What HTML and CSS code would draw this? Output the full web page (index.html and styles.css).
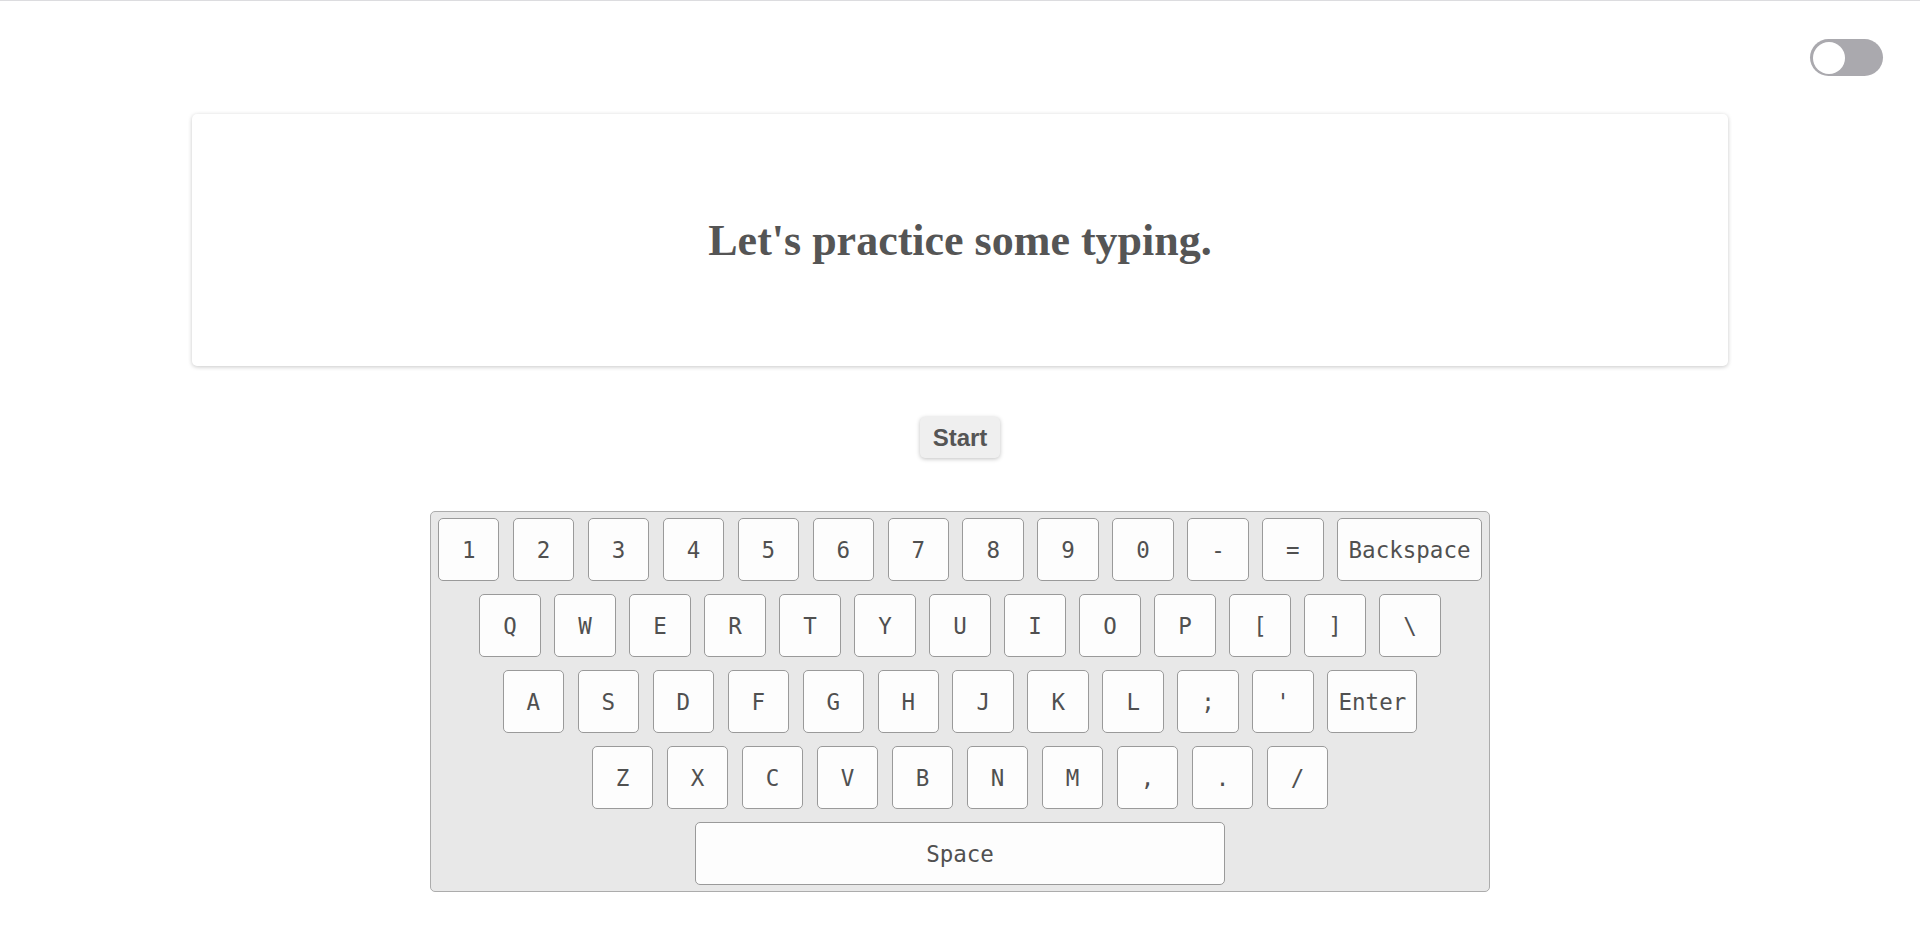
FILE: index.html
```html
<!DOCTYPE html>
<html lang="en">
<head>
<meta charset="utf-8">
<title>Typing Practice</title>
<link rel="stylesheet" href="styles.css">
</head>
<body>
<header class="topbar">
  <label class="toggle"><span class="knob"></span></label>
</header>
<main class="main">
  <section class="card">
    <h1 class="prompt">Let's practice some typing.</h1>
  </section>
  <button class="start">Start</button>
  <div class="keyboard">
    <div class="row">
      <div class="key">1</div><div class="key">2</div><div class="key">3</div><div class="key">4</div><div class="key">5</div><div class="key">6</div><div class="key">7</div><div class="key">8</div><div class="key">9</div><div class="key">0</div><div class="key">-</div><div class="key">=</div><div class="key backspace">Backspace</div>
    </div>
    <div class="row">
      <div class="key">Q</div><div class="key">W</div><div class="key">E</div><div class="key">R</div><div class="key">T</div><div class="key">Y</div><div class="key">U</div><div class="key">I</div><div class="key">O</div><div class="key">P</div><div class="key">[</div><div class="key">]</div><div class="key">\</div>
    </div>
    <div class="row">
      <div class="key">A</div><div class="key">S</div><div class="key">D</div><div class="key">F</div><div class="key">G</div><div class="key">H</div><div class="key">J</div><div class="key">K</div><div class="key">L</div><div class="key">;</div><div class="key">'</div><div class="key enter">Enter</div>
    </div>
    <div class="row">
      <div class="key">Z</div><div class="key">X</div><div class="key">C</div><div class="key">V</div><div class="key">B</div><div class="key">N</div><div class="key">M</div><div class="key">,</div><div class="key">.</div><div class="key">/</div>
    </div>
    <div class="row">
      <div class="key space">Space</div>
    </div>
  </div>
</main>
</body>
</html>
```

FILE: styles.css
```css
html, body {
  margin: 0;
  padding: 0;
  background: #ffffff;
}

body {
  border-top: 1px solid #dcdcdf;
  font-family: "Liberation Sans", Arial, sans-serif;
  color: #555555;
}

.topbar {
  display: flex;
  justify-content: flex-end;
  padding: 38px 37px 0 0;
}

.toggle {
  display: block;
  width: 73px;
  height: 37px;
  border-radius: 19px;
  background: #aaa9ae;
  position: relative;
}

.knob {
  position: absolute;
  left: 2.5px;
  top: 2.5px;
  width: 32px;
  height: 32px;
  border-radius: 50%;
  background: #ffffff;
}

.main {
  display: flex;
  flex-direction: column;
  align-items: center;
}

.card {
  margin-top: 38px;
  width: 1536px;
  height: 252px;
  box-sizing: border-box;
  background: #ffffff;
  border-radius: 5px;
  box-shadow: 0 1px 4px rgba(0, 0, 0, 0.22);
  display: flex;
  align-items: center;
  justify-content: center;
}

.prompt {
  margin: 0;
  font-family: "Liberation Serif", "Times New Roman", serif;
  font-weight: bold;
  font-size: 44px;
  color: #555555;
}

.start {
  margin-top: 51px;
  font-family: "Liberation Sans", Arial, sans-serif;
  font-weight: bold;
  font-size: 24px;
  color: #555555;
  background: #efefef;
  border: none;
  border-radius: 5px;
  padding: 7px 13px;
  line-height: 27px;
  box-shadow: 0 1px 4px rgba(0, 0, 0, 0.25);
}

.keyboard {
  margin-top: 53px;
  width: 1060px;
  box-sizing: border-box;
  background: #e8e8e8;
  border: 1px solid #acacac;
  border-radius: 5px;
  padding: 6px 7px 6px;
  display: flex;
  flex-direction: column;
  gap: 13px;
}

.row {
  display: flex;
  justify-content: center;
  gap: 13.6px;
}

.key {
  width: 61.4px;
  height: 63px;
  box-sizing: border-box;
  background: #fdfdfd;
  border: 1px solid #9a9a9a;
  border-radius: 5px;
  display: flex;
  align-items: center;
  justify-content: center;
  font-family: "DejaVu Sans Mono", "Liberation Mono", monospace;
  font-size: 22.5px;
  color: #505050;
}

.backspace {
  width: 145px;
}

.enter {
  width: 90px;
}

.space {
  width: 530px;
}
```
